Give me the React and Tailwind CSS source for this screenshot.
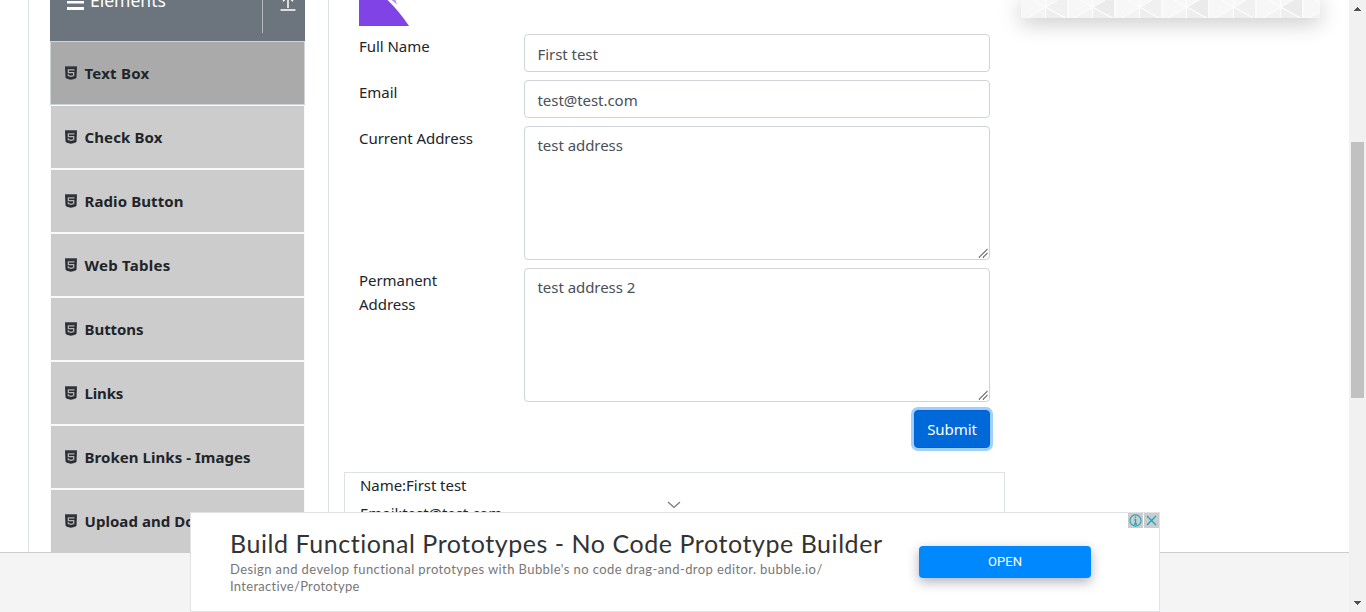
import React from "react";

const items = [
  ["Text Box", "tracking-[0.22px]"],
  ["Check Box", "tracking-[0.12px]"],
  ["Radio Button", "tracking-[0.1px]"],
  ["Web Tables", "tracking-[0.25px]"],
  ["Buttons", "tracking-[-0.05px]"],
  ["Links", "tracking-[-0.15px]"],
  ["Broken Links - Images", "tracking-[0.05px]"],
  ["Upload and Download", "tracking-[0.05px]"],
];

function ShieldIcon() {
  return (
    <svg width="12" height="14" viewBox="0 0 12 14" className="shrink-0">
      <path d="M0 .2h12l-.5 11.200Q11 12.800 6 13.800Q1 12.800 .5 11.400Z" fill="#2b2f33" />
      <path d="M0 .2h12v1H0z" fill="#5c6064" />
      <path d="M9.500 3.800H3.300V6.700H8.700V9.500L6 10.300L3.300 9.500V8.300" fill="none" stroke="#b4b6b8" strokeWidth="1.200" />
    </svg>
  );
}

function Sidebar() {
  return (
    <aside className="ml-[21px] w-[255px] shrink-0 overflow-hidden">
      <div className="flex h-[41px] justify-between bg-[#6c757d] text-white">
        <div className="flex pl-[17px]">
          <svg width="17" height="11" viewBox="0 0 17 11" className="shrink-0">
            <path d="M0 1h17v2.500H0zM0 7h17v3H0z" fill="#fff" />
          </svg>
          <span className="-mt-[15px] ml-[6px] text-[17.5px] leading-[30px]">Elements</span>
        </div>
        <div className="flex">
          <div className="h-[33px] w-px bg-[#b5babe]" />
          <svg width="42" height="12" viewBox="0 0 42 12">
            <path d="M17.500 10h15M25 8V-3M20 1.200l5-5 5 5" fill="none" stroke="#fff" strokeWidth="1.500" />
          </svg>
        </div>
      </div>
      {items.map(([t, tracking], i) => (
        <div
          key={t}
          className={
            "flex h-16 items-center border pl-[14px] " +
            (i === 0 ? "border-[#ced4da] bg-[#aaa]" : "border-[#f8f9fa] bg-[#ccc]")
          }
        >
          <ShieldIcon />
          <span className={"ml-[7.5px] whitespace-nowrap text-[15px] font-bold leading-6 text-[#212529] " + tracking}>{t}</span>
        </div>
      ))}
    </aside>
  );
}

function Grip() {
  return (
    <svg width="10" height="10" viewBox="0 0 10 10" className="absolute right-px bottom-px">
      <path d="M1 9.500L9.500 1M5 9.500L9.500 5" stroke="#333" strokeWidth="1.100" strokeDasharray="1.100 .35" />
    </svg>
  );
}

function Field({ label, value, area }) {
  return (
    <div className="mb-2 flex">
      <div className="w-[165px] shrink-0 pr-[48px] leading-6 text-[#212529]">{label}</div>
      <div
        className={
          "relative w-[466px] rounded-[4px] border border-[#ced4da] bg-white px-[12.500px] leading-6 text-[#495057] " +
          (area ? "h-[134px] pt-[6px]" : "h-[38px] pt-[7px]")
        }
      >
        {value}
        {area && <Grip />}
      </div>
    </div>
  );
}

function Content() {
  return (
    <main className="w-[677px] shrink-0 text-[15px] tracking-[-0.05px]">
      <div className="pl-[30px]">
        <svg width="51" height="26" viewBox="0 0 51 26" className="block">
          <path d="M0 0H28.500Q40 11 50 26H0Z" fill="#7f43e6" />
          <path d="M32.500 0h4l1.500 4.500Z" fill="#b893f2" />
        </svg>
        <div className="pt-2">
          <Field label="Full Name" value="First test" />
          <Field label="Email" value="test@test.com" />
          <Field label="Current Address" value="test address" area />
          <Field label="Permanent Address" value="test address 2" area />
        </div>
        <div className="flex w-[631px] justify-end">
          <button className="h-[38px] w-[76px] rounded-[4px] border border-[#0062cc] bg-[#0069d9] leading-6 text-white shadow-[0_0_0_3px_#9fceff]">
            Submit
          </button>
        </div>
      </div>
      <div className="mt-6 ml-[15px] h-[120px] w-[661px] border border-[#dee2e6] pl-[15px] text-[#212529]">
        <p className="mb-1 leading-6">Name:First test</p>
        <p className="leading-6">Email:test@test.com</p>
      </div>
    </main>
  );
}

function SideAd() {
  return (
    <div className="ml-[15px] h-[18px] w-[299px] shrink-0 bg-[#f7f7f7] shadow-[0_4px_22px_rgba(0,0,0,0.25)]">
      <svg width="299" height="18" viewBox="0 0 299 18" className="block">
        {[0, 1, 2, 3, 4, 5, 6].map((n) => (
          <g key={n} transform={`translate(${n * 47} 0)`}>
            <path d="M25 7L46 -5V18Z" fill={n % 2 ? "#ebebeb" : "#f0f0f0"} />
            <path d="M25 7V18H45Z" fill="#eee" />
            <path d="M24 7V18H5Z" fill="#f3f3f3" />
            <path d="M12 0L46 19M37 0L6 18M24.500 0V18M47 0V18" stroke="#fcfcfc" strokeWidth="1.300" />
          </g>
        ))}
      </svg>
    </div>
  );
}

function Scrollbar() {
  return (
    <div className="flex h-[612px] w-[17px] shrink-0 flex-col items-center bg-[#f1f1f1]">
      <svg width="7" height="4" viewBox="0 0 7 4" className="mt-[7px]" shapeRendering="crispEdges">
        <path d="M3 0h1v1h1v1h1v1h1v1H0V3h1V2h1V1h1z" fill="#505050" />
      </svg>
      <div className="mt-[131px] h-[256px] w-[13px] bg-[#c1c1c1]" />
      <svg width="7" height="4" viewBox="0 0 7 4" className="mt-auto mb-[7px]" shapeRendering="crispEdges">
        <path d="M0 0h7v1H6v1H5v1H4v1H3V3H2V2H1V1H0z" fill="#505050" />
      </svg>
    </div>
  );
}

function BottomAd() {
  return (
    <div className="absolute left-[190px] top-[512px] flex h-[100px] w-[970px] border border-[#e2e2e4] bg-white font-['Lato',sans-serif]">
      <div className="w-[728px] shrink-0 pl-[39px] pt-[14px]">
        <h2 className="whitespace-nowrap text-[25px] leading-[32px] tracking-[0.55px] text-[#333]">
          Build Functional Prototypes - No Code Prototype Builder
        </h2>
        <p className="mt-[2px] whitespace-nowrap text-[13px] leading-[17px] tracking-[0.41px] text-[#777]">
          Design and develop functional prototypes with Bubble's no code drag-and-drop editor. bubble.io/
          <br />
          <span className="tracking-[0.3px]">Interactive/Prototype</span>
        </p>
      </div>
      <div className="mt-[33px] flex h-8 w-[172px] items-center justify-center rounded-[4px] bg-[#0088ff] font-['Roboto',sans-serif] text-[13px] text-white shadow-[0_4px_12px_rgba(30,30,70,0.35)]">
        OPEN
      </div>
      <div className="absolute right-0 top-0 flex gap-px">
        <svg width="15" height="15" viewBox="0 0 15 15" className="bg-[#ccc]">
          <circle cx="7.500" cy="7.500" r="5.600" fill="none" stroke="#11a9c5" strokeWidth="1.100" />
          <path d="M7.500 3.500v1.500M7.500 6v5M6.500 6.500h1M6 11h3" stroke="#11a9c5" strokeWidth="1.300" />
        </svg>
        <svg width="15" height="15" viewBox="0 0 15 15" className="bg-[#ccc]">
          <path d="M3 3l9 9M12 3l-9 9" stroke="#11a9c5" strokeWidth="1.400" />
        </svg>
      </div>
    </div>
  );
}

export default function App() {
  return (
    <div className="relative flex h-[612px] w-[1366px] overflow-hidden bg-[#f4f4f4] font-['Noto_Sans',sans-serif]">
      <div className="min-w-0 flex-1">
        <div className="flex h-[553px] overflow-hidden border-b border-[#ccc] bg-white">
          <div className="ml-7 flex w-[301px] shrink-0 border-x border-[#dee2e6]">
            <Sidebar />
          </div>
          <Content />
          <SideAd />
        </div>
      </div>
      <Scrollbar />
      <svg width="14" height="8" viewBox="0 0 14 8" className="absolute left-[667px] top-[501px]">
        <path d="M1 1l6 5.500L13 1" fill="none" stroke="#777" strokeWidth="1.200" />
      </svg>
      <BottomAd />
    </div>
  );
}
